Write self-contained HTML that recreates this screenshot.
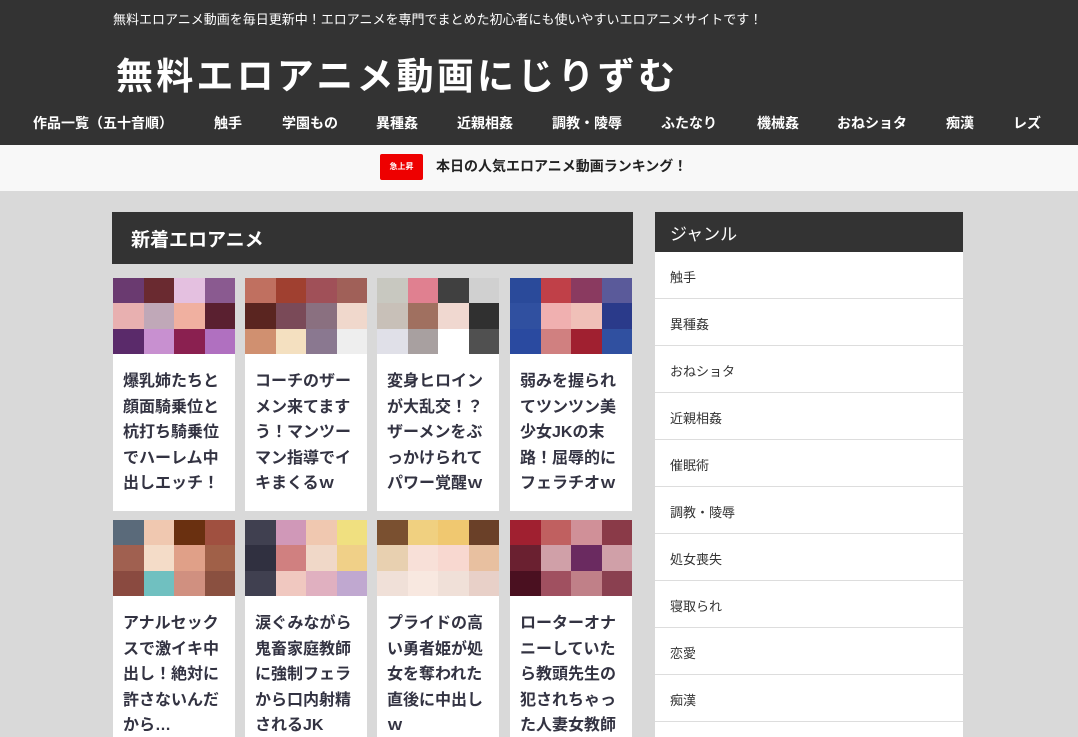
<!DOCTYPE html>
<html><head><meta charset="utf-8"><style>
*{margin:0;padding:0;box-sizing:border-box}
html,body{width:1078px;height:737px;overflow:hidden}
body{background:#d9d9d9;font-family:"Liberation Sans","Noto Sans CJK JP",sans-serif;position:relative}
.hd{position:absolute;left:0;top:0;width:1078px;height:145px;background:#333}
.tag{position:absolute;left:113px;top:9px;color:#fff;font-size:13px}
.ttl{position:absolute;left:116px;top:46px;color:#fff;font-size:37px;letter-spacing:3.2px;font-weight:bold;font-family:"WenQuanYi Zen Hei","Noto Sans CJK JP",sans-serif}
.nav{position:absolute;top:113px;color:#fff;font-size:14px;font-weight:bold}
.bar{position:absolute;left:0;top:145px;width:1078px;height:46px;background:#f8f8f8}
.badge{position:absolute;left:380px;top:154px;width:43px;height:26px;background:#e00;border-radius:2px;color:#fff;font-size:8px;font-weight:bold;text-align:center;line-height:26px}
.rk{position:absolute;left:436px;top:156px;font-size:14px;font-weight:bold;color:#222}
.mh{position:absolute;left:112px;top:212px;width:521px;height:52px;background:#333;color:#fff;font-size:19px;font-weight:bold;padding:13px 0 0 19px}
.card{position:absolute;width:122px;background:#fff}
.img{height:76px;display:grid;grid-template-columns:repeat(4,1fr);grid-template-rows:repeat(3,1fr)}
.t{padding:15px 8px 0 10px;font-size:16px;font-weight:bold;color:#333342;line-height:25.5px}
.side{position:absolute;left:655px;top:212px;width:308px;background:#fff}
.sh{height:40px;background:#333;color:#fff;font-size:17px;padding:8px 0 0 15px}
.si{height:47px;border-bottom:1px solid #ddd;font-size:13px;color:#333;padding:15px 0 0 15px}
</style></head><body>
<div class="hd"></div>
<div class="tag">無料エロアニメ動画を毎日更新中！エロアニメを専門でまとめた初心者にも使いやすいエロアニメサイトです！</div>
<div class="ttl">無料エロアニメ動画にじりずむ</div>
<div class="nav" style="left:33px">作品一覧（五十音順）</div>
<div class="nav" style="left:214px">触手</div>
<div class="nav" style="left:282px">学園もの</div>
<div class="nav" style="left:376px">異種姦</div>
<div class="nav" style="left:457px">近親相姦</div>
<div class="nav" style="left:552px">調教・陵辱</div>
<div class="nav" style="left:661px">ふたなり</div>
<div class="nav" style="left:757px">機械姦</div>
<div class="nav" style="left:837px">おねショタ</div>
<div class="nav" style="left:946px">痴漢</div>
<div class="nav" style="left:1013px">レズ</div>
<div class="bar"></div>
<div class="badge">急上昇</div>
<div class="rk">本日の人気エロアニメ動画ランキング！</div>
<div class="mh">新着エロアニメ</div>

<div class="card" style="left:113px;top:278px;height:233px"><div class="img" style="background:#8a4f8a"><i style="background:#6a3a70"></i><i style="background:#6a2a30"></i><i style="background:#e4c0e0"></i><i style="background:#8a5a90"></i><i style="background:#e8b0b0"></i><i style="background:#c0a8b8"></i><i style="background:#f0b0a0"></i><i style="background:#5a2030"></i><i style="background:#5a2a6a"></i><i style="background:#c890d0"></i><i style="background:#8a2050"></i><i style="background:#b070c0"></i></div><div class="t">爆乳姉たちと顔面騎乗位と杭打ち騎乗位でハーレム中出しエッチ！</div></div>
<div class="card" style="left:245px;top:278px;height:233px"><div class="img" style="background:#c07060"><i style="background:#c07060"></i><i style="background:#a04030"></i><i style="background:#a05058"></i><i style="background:#a06058"></i><i style="background:#5a2520"></i><i style="background:#7a4a58"></i><i style="background:#8a7080"></i><i style="background:#f0d8cc"></i><i style="background:#d09070"></i><i style="background:#f4e0c0"></i><i style="background:#8a7890"></i><i style="background:#eee"></i></div><div class="t">コーチのザーメン来てます う！マンツーマン指導でイキまくるｗ</div></div>
<div class="card" style="left:377px;top:278px;height:233px"><div class="img" style="background:#b0b0b0"><i style="background:#c8c8c0"></i><i style="background:#e08090"></i><i style="background:#404040"></i><i style="background:#d0d0d0"></i><i style="background:#c8c0b8"></i><i style="background:#a07060"></i><i style="background:#f0d8d0"></i><i style="background:#303030"></i><i style="background:#e0e0e8"></i><i style="background:#a8a0a0"></i><i style="background:#fff"></i><i style="background:#505050"></i></div><div class="t">変身ヒロインが大乱交！？ザーメンをぶっかけられてパワー覚醒ｗ</div></div>
<div class="card" style="left:510px;top:278px;height:233px"><div class="img" style="background:#3050a0"><i style="background:#2a4a9a"></i><i style="background:#c04048"></i><i style="background:#8a3a60"></i><i style="background:#5a5a9a"></i><i style="background:#3050a0"></i><i style="background:#f0b0b0"></i><i style="background:#f0c0b8"></i><i style="background:#2a3a8a"></i><i style="background:#2a4aa0"></i><i style="background:#d08080"></i><i style="background:#a02030"></i><i style="background:#3050a0"></i></div><div class="t">弱みを握られてツンツン美少女JKの末路！屈辱的にフェラチオｗ</div></div>

<div class="card" style="left:113px;top:520px;height:230px"><div class="img" style="background:#a06050"><i style="background:#5a6a7a"></i><i style="background:#f0c8b0"></i><i style="background:#6a3010"></i><i style="background:#a05040"></i><i style="background:#a06050"></i><i style="background:#f4dcc8"></i><i style="background:#e0a088"></i><i style="background:#a06048"></i><i style="background:#8a4a40"></i><i style="background:#70c0c0"></i><i style="background:#d09080"></i><i style="background:#8a5040"></i></div><div class="t">アナルセックスで激イキ中出し！絶対に許さないんだから…</div></div>
<div class="card" style="left:245px;top:520px;height:230px"><div class="img" style="background:#e0c070"><i style="background:#404050"></i><i style="background:#d098b8"></i><i style="background:#f0c8b0"></i><i style="background:#f0e080"></i><i style="background:#303040"></i><i style="background:#d08080"></i><i style="background:#f0d8c8"></i><i style="background:#f0d088"></i><i style="background:#404050"></i><i style="background:#f0c8c0"></i><i style="background:#e0b0c0"></i><i style="background:#c0a8d0"></i></div><div class="t">涙ぐみながら鬼畜家庭教師に強制フェラから口内射精されるJK</div></div>
<div class="card" style="left:377px;top:520px;height:230px"><div class="img" style="background:#e8c080"><i style="background:#7a5030"></i><i style="background:#f0d080"></i><i style="background:#f0c870"></i><i style="background:#6a4028"></i><i style="background:#e8d0b0"></i><i style="background:#f8e0d8"></i><i style="background:#f8d8d0"></i><i style="background:#e8c0a0"></i><i style="background:#f0e0d8"></i><i style="background:#f8e8e0"></i><i style="background:#f0e0d8"></i><i style="background:#e8d0c8"></i></div><div class="t">プライドの高い勇者姫が処女を奪われた直後に中出しｗ</div></div>
<div class="card" style="left:510px;top:520px;height:230px"><div class="img" style="background:#8a3040"><i style="background:#a02030"></i><i style="background:#c06060"></i><i style="background:#d09098"></i><i style="background:#8a3a48"></i><i style="background:#6a2030"></i><i style="background:#d0a0a8"></i><i style="background:#6a2a60"></i><i style="background:#d0a0a8"></i><i style="background:#4a1020"></i><i style="background:#a05060"></i><i style="background:#c08088"></i><i style="background:#8a4050"></i></div><div class="t">ローターオナニーしていたら教頭先生の犯されちゃった人妻女教師</div></div>

<div class="side"><div class="sh">ジャンル</div>
<div class="si">触手</div><div class="si">異種姦</div><div class="si">おねショタ</div><div class="si">近親相姦</div><div class="si">催眠術</div><div class="si">調教・陵辱</div><div class="si">処女喪失</div><div class="si">寝取られ</div><div class="si">恋愛</div><div class="si">痴漢</div><div class="si"></div></div>
</body></html>
